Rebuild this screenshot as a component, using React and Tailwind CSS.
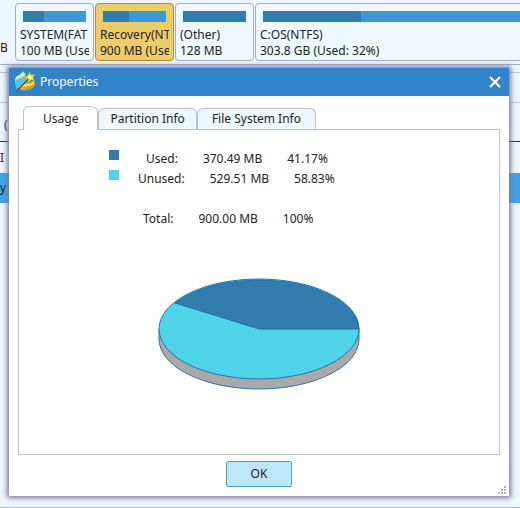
import React, { useState } from "react";

const partitions = [
  { name: "SYSTEM(FAT", size: "100 MB (Use", used: 33 },
  { name: "Recovery(NT", size: "900 MB (Use", used: 41, active: true },
  { name: "(Other)", size: "128 MB", used: 100 },
  { name: "C:OS(NTFS)", size: "303.8 GB (Used: 32%)", used: 32, wide: true }
];

const tabs = [
  { name: "Usage", padding: "px-[19px]" },
  { name: "Partition Info", padding: "px-[11px]" },
  { name: "File System Info", padding: "px-[14px]" }
];

const usage = [
  { label: "Used:", size: "370.49 MB", percent: "41.17%", swatch: "bg-[#337cae]", indent: "pl-[27px]" },
  { label: "Unused:", size: "529.51 MB", percent: "58.83%", swatch: "bg-[#4fd3e9]", indent: "pl-[19px]" },
  { label: "", size: "", percent: "", swatch: "", indent: "" },
  { label: "Total:", size: "900.00 MB", percent: "100%", swatch: "", indent: "pl-6" }
];

function PartitionCard({ name, size, used, active, wide }) {
  return (
    <div
      className={`shrink-0 rounded border pt-[7px] pb-px ${wide ? "w-[322px]" : "w-[79px]"} ${
        active ? "border-[#b58a35] bg-[#ebcd6c]" : "border-[#9fadc6] bg-[#eff8fe]"
      }`}
    >
      <div className="mx-[7px] h-[11px] bg-[#3e98d3]">
        <div className="h-full bg-[#317dac]" style={{ width: `${used}%` }} />
      </div>
      <div className="mx-1 mt-[5px] overflow-hidden whitespace-nowrap">
        <p>{name}</p>
        <p>{size}</p>
      </div>
    </div>
  );
}

function WizardIcon() {
  return (
    <svg width="22" height="22" viewBox="0 0 22 22" aria-hidden="true">
      <defs>
        <linearGradient id="disk" x1="0" y1="0" x2="0" y2="1">
          <stop offset="0" stopColor="#8ad9ee" />
          <stop offset="1" stopColor="#1b83bd" />
        </linearGradient>
        <linearGradient id="gold" x1="0" y1="0" x2="1" y2="1">
          <stop offset="0" stopColor="#e9c52f" />
          <stop offset="1" stopColor="#c59a1d" />
        </linearGradient>
      </defs>
      <path d="M1 9 Q1 5 7 3 L12 5 L12 12 L8 19 Q2 18 1 15Z" fill="url(#disk)" />
      <path d="M1 8 Q4 3 10 3 L12 6 Q5 6 1 10Z" fill="#d3efcc" />
      <path d="M1 10 Q6 8 11 9 L6 16 L2 17Z" fill="#52c4e8" />
      <path d="M11 11 Q17 12 20 9 Q22 12 20 16 Q16 20 8 19 L5 18Z" fill="url(#gold)" />
      <path d="M9 13 Q16 14 20 11 L20 13 Q15 16 8 15Z" fill="#f6e676" />
      <path d="M16 1 L17 4 L21 3 L19 7 L21 10 L17 9 L14 12 L13 8 L9 6 L13 5Z" fill="#f3df58" stroke="#7b9b3e" strokeWidth=".7" />
      <path d="M16 4 L17 6 L19 7 L16 8 L14 7Z" fill="#fff6b4" />
      <path d="M2 20 L14 8" stroke="#44554f" strokeWidth="1.8" />
      <path d="M2 19 L13 8" stroke="#d7e3c8" strokeWidth=".7" />
      <path d="M9 0 L10 2 L12 3 L10 4 L9 6 L8 4 L6 3 L8 2Z" fill="#f5f7a0" />
    </svg>
  );
}

function PieChart() {
  return (
    <svg width="202" height="112" viewBox="0 0 202 112" role="img" aria-label="Disk usage">
      <path d="M1 51 V61 A100 50 0 0 0 201 61 V51Z" fill="#a9a9a9" stroke="#2874ab" />
      <ellipse cx="101" cy="51" rx="100" ry="50" fill="#4fd3e9" stroke="#2874ab" />
      <path d="M101 51 L17 25 A100 50 0 0 1 201 51Z" fill="#337cae" stroke="#2471a5" strokeLinejoin="round" />
    </svg>
  );
}

function ResizeGrip() {
  return (
    <svg width="8" height="8" viewBox="0 0 8 8" fill="#b5b5b8" className="absolute right-[3px] bottom-[2px]" aria-hidden="true">
      <path d="M6 0h2v2H6zM3 3h2v2H3zM6 3h2v2H6zM0 6h2v2H0zM3 6h2v2H3zM6 6h2v2H6z" />
    </svg>
  );
}

function PropertiesDialog() {
  const [tab, setTab] = useState("Usage");

  return (
    <section
      role="dialog"
      aria-labelledby="dialog-title"
      className="absolute top-[68px] right-[11px] bottom-3 left-[9px] flex flex-col bg-white shadow-[0_0_5px_2px_#777b9d]"
    >
      <header className="flex h-7 shrink-0 items-center bg-[#3284c8] pr-2 pl-[5px] text-white">
        <WizardIcon />
        <h1 id="dialog-title" className="ml-1">Properties</h1>
        <button type="button" aria-label="Close" className="ml-auto">
          <svg width="12" height="12" viewBox="0 0 12 12" stroke="white" strokeWidth="2.2">
            <path d="M1 1L11 11M11 1L1 11" />
          </svg>
        </button>
      </header>
      <div className="flex flex-1 flex-col px-[9px] pt-[10px]">
        <div role="tablist" className="flex items-end pl-[5px]">
          {tabs.map(({ name, padding }) => (
            <button
              key={name}
              type="button"
              role="tab"
              aria-selected={tab === name}
              onClick={() => setTab(name)}
              className={`rounded-t-md border border-b-0 border-[#b9c1d3] ${padding} ${
                tab === name ? "relative z-10 -mb-px h-6 bg-white" : "h-[21px] bg-[#eef7fd]"
              }`}
            >
              {name}
            </button>
          ))}
        </div>
        <div role="tabpanel" className="flex-1 border border-[#b9c1d3] pt-5">
          <table className="ml-[90px] block">
            <tbody className="block">
              {usage.map((row, i) => (
                <tr key={i} className="flex h-5 gap-[25px] leading-[18px]">
                  <th className="flex font-normal">
                    <span className={`size-[10px] ${row.swatch}`} />
                    <span className={row.indent}>{row.label}</span>
                  </th>
                  <td>{row.size}</td>
                  <td>{row.percent}</td>
                </tr>
              ))}
            </tbody>
          </table>
          <div className="mt-12 flex justify-center">
            <PieChart />
          </div>
        </div>
        <div className="flex h-[41px] items-start justify-center pt-[6px]">
          <button type="button" className="h-[26px] w-[66px] rounded-xs border border-[#4d9fc6] bg-[#bde5fc]">
            OK
          </button>
        </div>
      </div>
      <ResizeGrip />
    </section>
  );
}

export default function App() {
  return (
    <main className="relative flex h-screen flex-col overflow-hidden bg-[#eef7fe] font-['Noto_Sans','Open_Sans',sans-serif] text-[12px] leading-4 text-[#222]">
      <div className="flex h-[65px] shrink-0 gap-px border-b border-[#a4adc8] pt-[3px] pb-[3px]">
        <span className="w-[14px] pt-[37px] pr-2 text-right">B</span>
        {partitions.map((p) => (
          <PartitionCard key={p.name} {...p} />
        ))}
      </div>
      <div className="mt-[7px] h-[31px] shrink-0 border-y border-[#b8c5df]" />
      <div className="h-[39px] shrink-0 border-b border-[#252b45] pt-[14px] pl-1">(</div>
      <div className="flex h-[31px] shrink-0 items-center">I</div>
      <div className="flex h-[30px] shrink-0 items-center bg-[#38a5ed]">y</div>
      <div className="flex-1 border-b border-[#aebed0]" />
      <PropertiesDialog />
    </main>
  );
}
